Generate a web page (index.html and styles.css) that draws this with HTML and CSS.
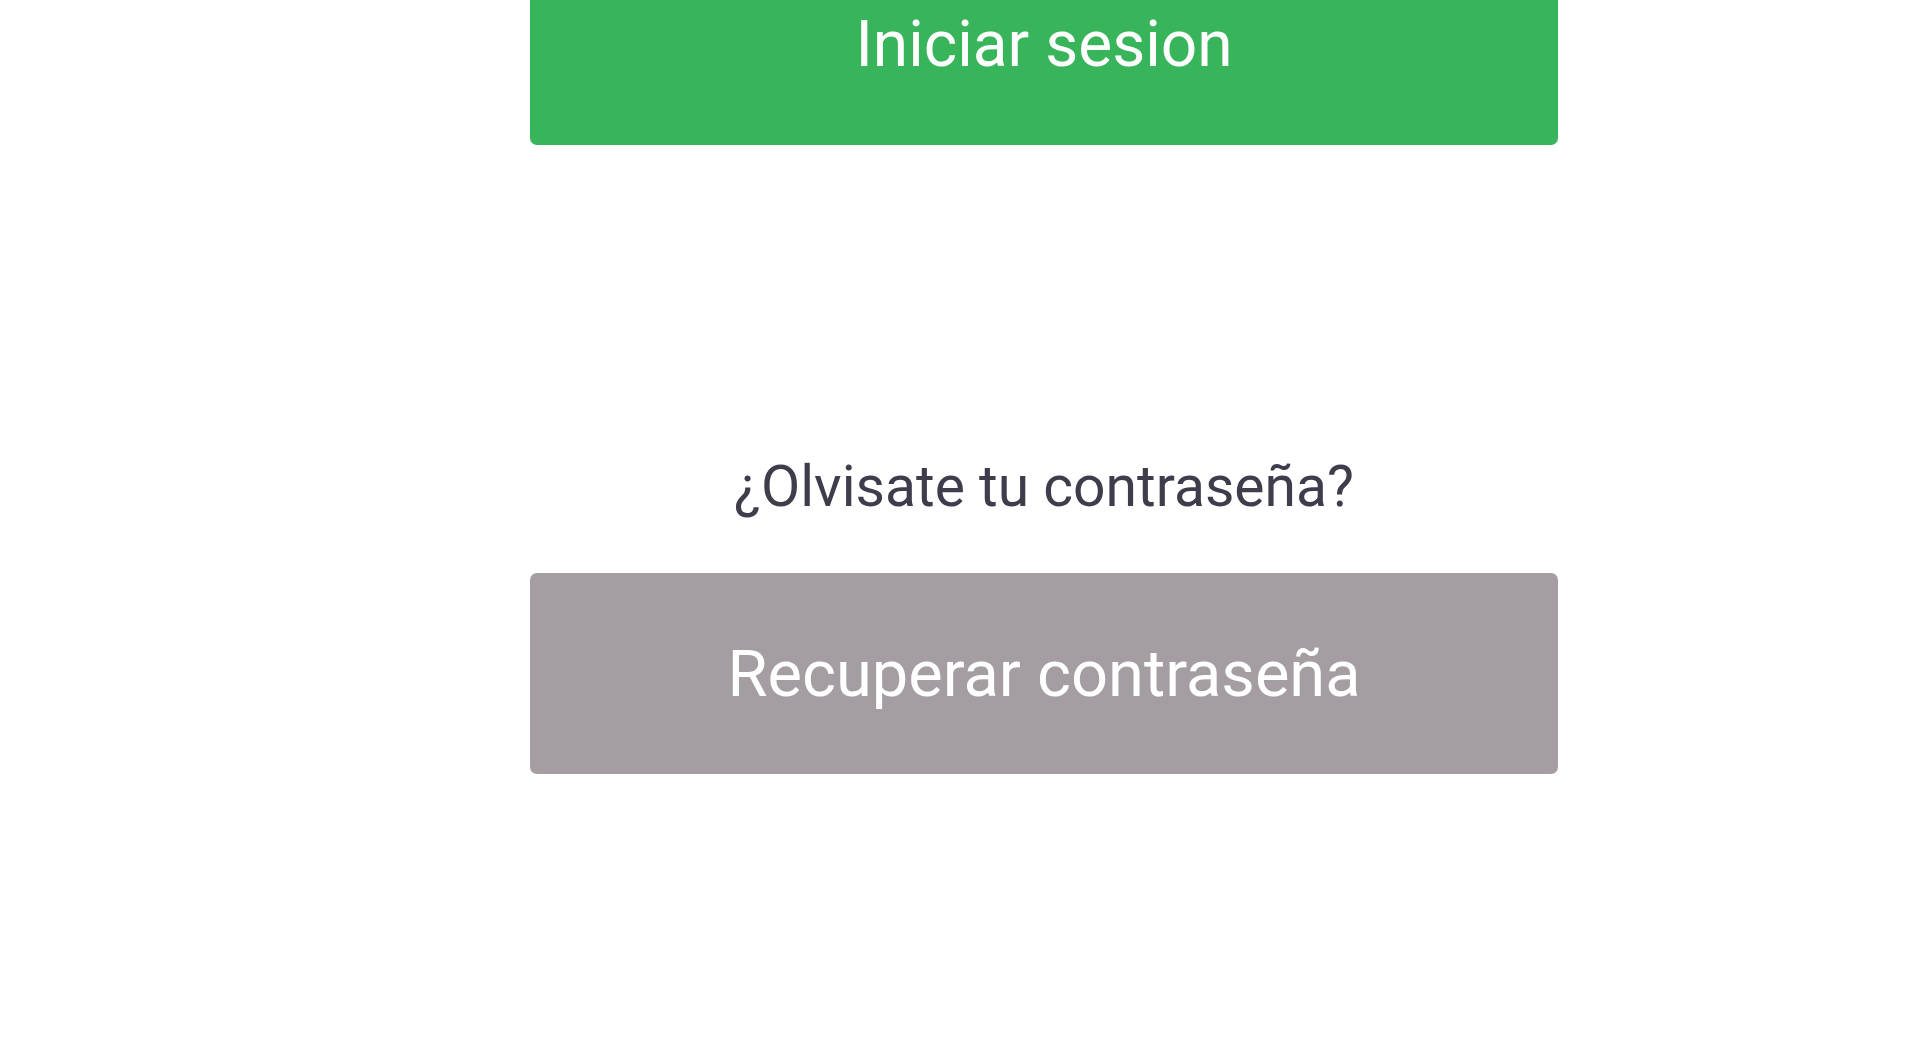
FILE: index.html
```html
<!DOCTYPE html>
<html lang="es">
<head>
<meta charset="utf-8">
<title>Iniciar sesion</title>
<link rel="stylesheet" href="styles.css">
</head>
<body>
<main class="wrap">
  <button class="btn btn-login" type="button">Iniciar sesion</button>
  <p class="question">¿Olvisate tu contraseña?</p>
  <button class="btn btn-recover" type="button">Recuperar contraseña</button>
</main>
</body>
</html>
```

FILE: styles.css
```css
html, body {
  margin: 0;
  padding: 0;
  background: #ffffff;
  overflow: hidden;
}

body {
  font-family: Roboto, "Liberation Sans", Arial, sans-serif;
}

.wrap {
  width: 1028px;
  margin: -56px 0 0 530px;
  display: flex;
  flex-direction: column;
}

.btn {
  height: 201px;
  border: 0;
  border-radius: 7px;
  display: flex;
  align-items: center;
  justify-content: center;
  font-family: Roboto, "Liberation Sans", Arial, sans-serif;
  font-size: 64px;
  font-weight: 400;
  color: #ffffff;
  padding: 0;
  cursor: pointer;
}

.btn-login {
  background: #38b55b;
}

.btn-recover {
  background: #a49ea2;
  font-size: 65px;
}

.question {
  margin: 307px 0 51px;
  height: 70px;
  line-height: 70px;
  text-align: center;
  font-size: 57px;
  color: #3e3d4c;
}
```
